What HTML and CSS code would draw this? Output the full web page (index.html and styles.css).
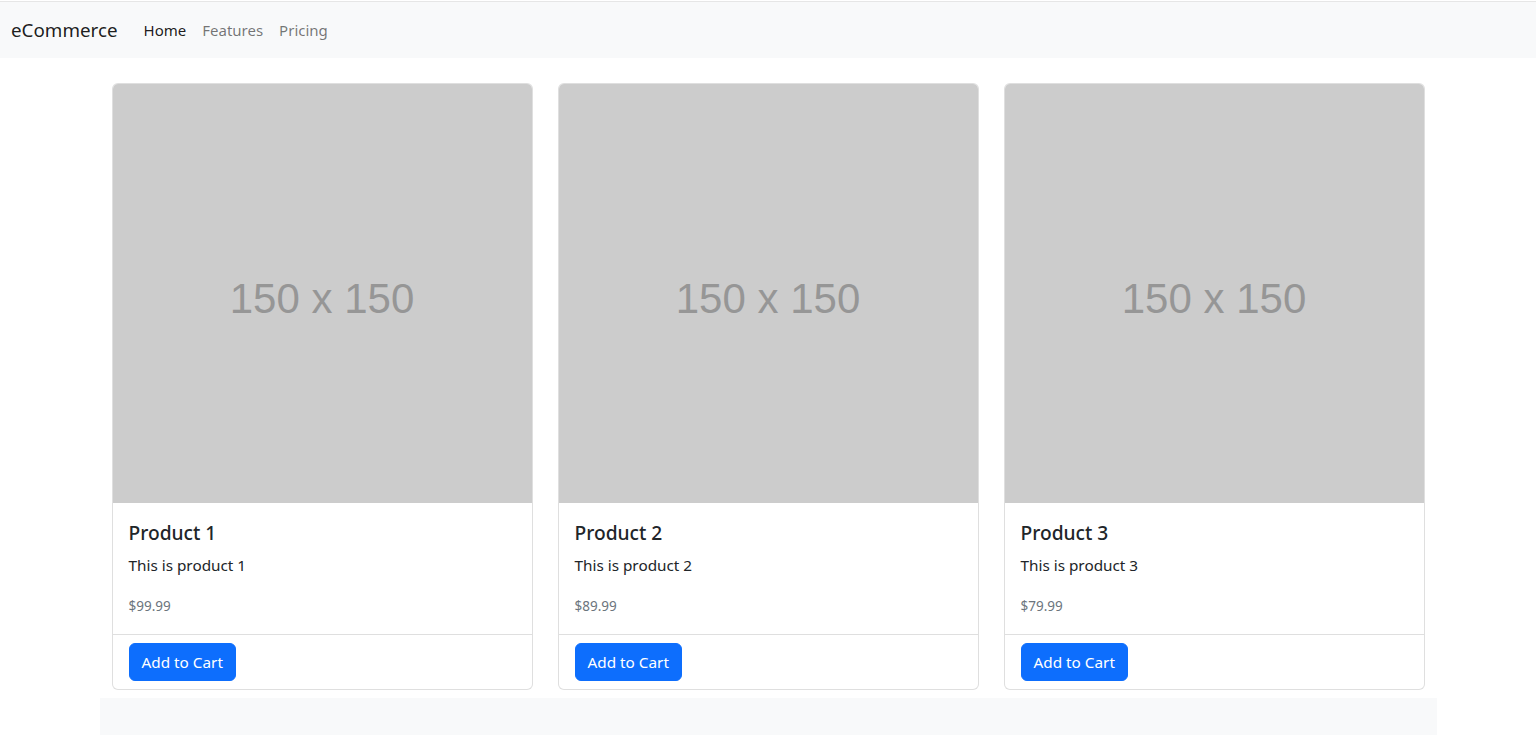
FILE: index.html
```html
<!DOCTYPE html>
<html lang="en">
<head>
    <meta charset="UTF-8">
    <meta name="viewport" content="width=device-width, initial-scale=1.0">
    <title>eCommerce</title>
    <link rel="stylesheet" href="styles.css">
</head>
<body>
    <nav class="navbar">
        <a class="brand" href="#">eCommerce</a>
        <ul class="nav-links">
            <li><a class="active" href="#">Home</a></li>
            <li><a href="#">Features</a></li>
            <li><a href="#">Pricing</a></li>
        </ul>
    </nav>

    <main class="container">
        <section class="products">
            <div class="card">
                <div class="card-img">150 x 150</div>
                <div class="card-body">
                    <h5 class="card-title">Product 1</h5>
                    <p class="card-text">This is product 1</p>
                    <p class="card-price"><small>$99.99</small></p>
                </div>
                <div class="card-footer">
                    <button class="btn">Add to Cart</button>
                </div>
            </div>
            <div class="card">
                <div class="card-img">150 x 150</div>
                <div class="card-body">
                    <h5 class="card-title">Product 2</h5>
                    <p class="card-text">This is product 2</p>
                    <p class="card-price"><small>$89.99</small></p>
                </div>
                <div class="card-footer">
                    <button class="btn">Add to Cart</button>
                </div>
            </div>
            <div class="card">
                <div class="card-img">150 x 150</div>
                <div class="card-body">
                    <h5 class="card-title">Product 3</h5>
                    <p class="card-text">This is product 3</p>
                    <p class="card-price"><small>$79.99</small></p>
                </div>
                <div class="card-footer">
                    <button class="btn">Add to Cart</button>
                </div>
            </div>
        </section>
    </main>

    <footer class="footer"></footer>
</body>
</html>
```

FILE: styles.css
```css
:root {
    --body-color: #212529;
    --muted: #6c757d;
    --light: #f8f9fa;
    --border: rgba(0, 0, 0, 0.125);
    --primary: #0d6efd;
}

* {
    margin: 0;
    padding: 0;
    box-sizing: border-box;
}

body {
    font-family: 'Noto Sans', 'Open Sans', sans-serif;
    font-size: 15.3px;
    line-height: 24px;
    color: var(--body-color);
    background: #fff;
}

a {
    text-decoration: none;
}

.navbar {
    display: flex;
    align-items: center;
    height: 57px;
    margin-top: 1px;
    padding: 8px 11px;
    background: var(--light);
    border-top: 1px solid #e6e6e6;
}

.brand {
    font-size: 18.8px;
    line-height: 30px;
    color: rgba(0, 0, 0, 0.9);
    margin-right: 18px;
}

.nav-links {
    display: flex;
    list-style: none;
}

.nav-links a {
    display: block;
    padding: 8px 8px;
    font-size: 15px;
    color: rgba(0, 0, 0, 0.55);
}

.nav-links a.active {
    color: rgba(0, 0, 0, 0.9);
}

.container {
    max-width: 1337px;
    margin: 25px auto 0;
    padding: 0 12px;
}

.products {
    display: grid;
    grid-template-columns: repeat(3, 1fr);
    gap: 25px;
}

.card {
    display: flex;
    flex-direction: column;
    border: 1px solid var(--border);
    border-radius: 6px;
    overflow: hidden;
    background: #fff;
}

.card-img {
    aspect-ratio: 1 / 1;
    background: #cccccc;
    display: flex;
    align-items: center;
    justify-content: center;
    padding-top: 12px;
    font-family: 'Liberation Sans', Arial, sans-serif;
    font-size: 42px;
    color: #969696;
    line-height: 1.15;
}

.card-body {
    padding: 18px 16px 16px;
}

.card-title {
    font-size: 19.2px;
    font-weight: 500;
    line-height: 24px;
    margin-bottom: 8px;
}

.card-text {
    margin-bottom: 16px;
}

.card-price {
    color: var(--muted);
}

.card-price small {
    font-size: 13.5px;
}

.card-footer {
    padding: 8px 16px;
    border-top: 1px solid var(--border);
}

.btn {
    font-family: inherit;
    font-size: 15.3px;
    line-height: 24px;
    padding: 6px 12px;
    color: #fff;
    background: var(--primary);
    border: 1px solid var(--primary);
    border-radius: 6px;
    cursor: pointer;
}

.footer {
    max-width: 1337px;
    height: 60px;
    margin: 8px auto 0;
    background: var(--light);
}
```
